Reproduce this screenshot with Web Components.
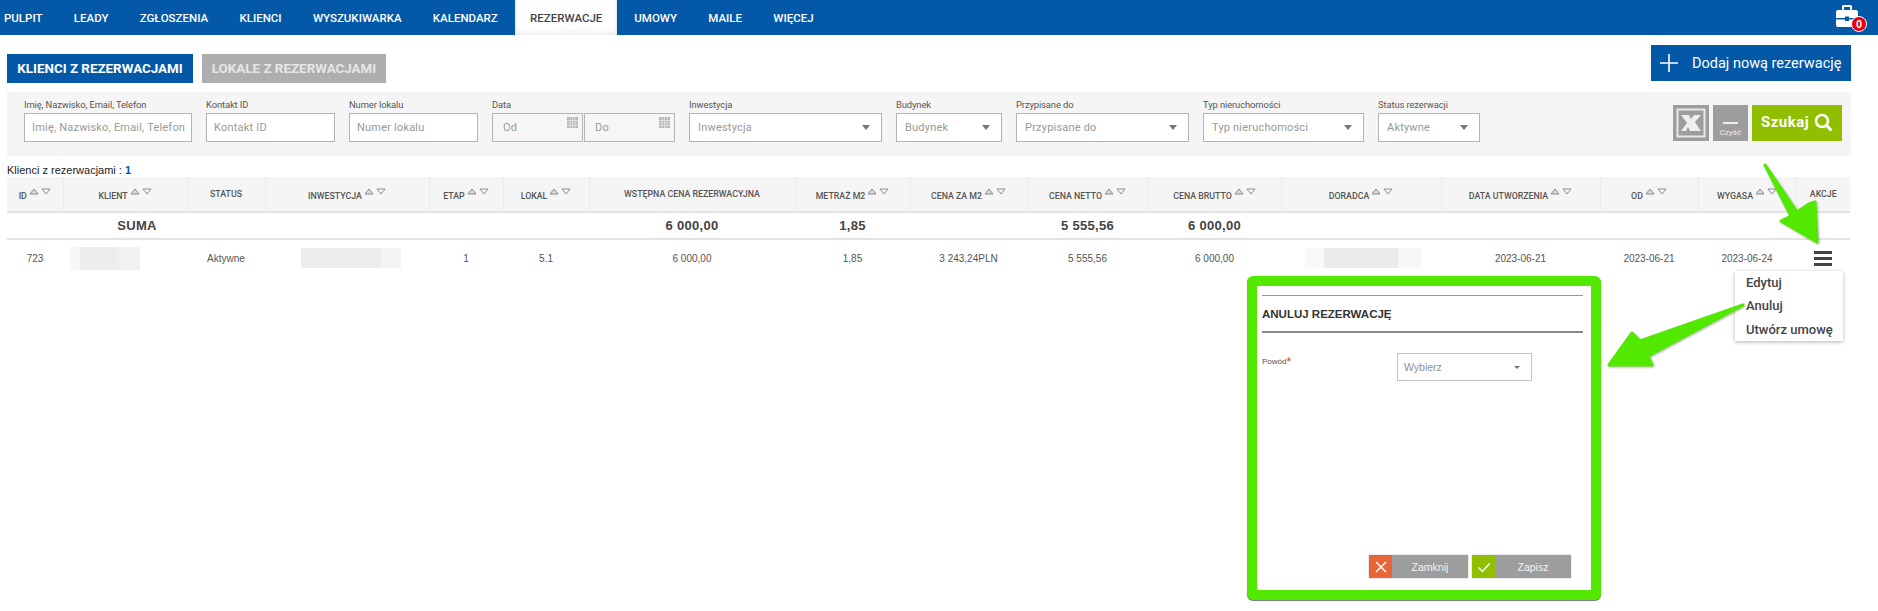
<!DOCTYPE html>
<html lang="pl">
<head>
	<meta charset="utf-8">
	<title>Rezerwacje</title>
	<style type="text/css">
html, body { margin: 0; padding: 0; background: #fff; }
body { position: relative; width: 1878px; height: 611px; overflow: hidden; font-family: Roboto, "Liberation Sans", sans-serif; color: #444; }
main { display: block; padding: 10px 27px 0 7px; }
	</style>
	<script type="text/javascript">
const ICON_CAL = '<svg width="11" height="11" viewBox="0 0 11 11"><rect width="11" height="11" fill="#b4b4b4"/><path d="M0 3.5h11M0 6h11M0 8.5h11M3 0v11M5.5 0v11M8 0v11" stroke="#e8e8e8" stroke-width="0.8"/></svg>';
const ICON_SORT = '<svg width="22" height="7" viewBox="0 0 22 7"><path d="M1 6L5 1L9 6Z" fill="#dcdcdc" stroke="#8a8a8a"/><path d="M13 1L17 6L21 1Z" fill="#f8f8f8" stroke="#8a8a8a"/></svg>';

function Define( name, css, html )
{
	customElements.define( name, class extends HTMLElement
	{
		constructor()
		{
			super();
			this.attachShadow( { mode: 'open' } );
		}

		connectedCallback()
		{
			const render = typeof html === 'function' ? html( this ) : html;
			this.shadowRoot.innerHTML = '<style>' + css + '</style>' + render;
		}
	} );
}

Define( 'app-nav',
[
	':host { display: flex; height: 35px; background: #0358a7; align-items: stretch; padding-left: 4px; position: relative; }',
	'a { display: flex; align-items: center; font: 500 11.5px Roboto, sans-serif; color: #fff; margin-right: 31.3px; white-space: nowrap; }',
	'a.on { background: linear-gradient( #fff 80%, #f1f1f1 ); color: #444; padding: 0 15px; margin: 0 17px 0 -14px; box-shadow: inset 3px 0 3px -3px #ccc, inset -3px 0 3px -3px #ccc; }',
	'.case { position: absolute; left: 1836px; top: 4px; width: 22px; height: 23px; }',
	'b { position: absolute; left: 1851px; top: 16px; width: 14px; height: 14px; border-radius: 50%; border: 1.5px solid #fff; background: #e8000d; color: #fff; font: 700 11px/14px "Liberation Sans", sans-serif; text-align: center; }',
].join( '' ),
	[ 'PULPIT', 'LEADY', 'ZGŁOSZENIA', 'KLIENCI', 'WYSZUKIWARKA', 'KALENDARZ', 'REZERWACJE', 'UMOWY', 'MAILE', 'WIĘCEJ' ]
		.map( ( t ) => '<a' + ( t === 'REZERWACJE' ? ' class="on"' : '' ) + '>' + t + '</a>' ).join( '' )
	+ '<svg class="case" viewBox="0 0 22 23"><path d="M6 6V2.500Q6 1 7.500 1h7Q16 1 16 2.500V6h-2V3H8v3Z" fill="#fff"/><path d="M0 8Q0 6 2 6h18Q22 6 22 8v6H13v-1.500H9V14H0Z" fill="#fff"/><path d="M0 15.500h9V17h4v-1.500h9V21Q22 23 20 23H2Q0 23 0 21Z" fill="#fff"/></svg><b>0</b>'
);

Define( 'tab-button',
[
	':host { display: inline-flex; align-items: center; justify-content: center; height: 29px; font: 700 13.4px Roboto, sans-serif; color: #fff; background: #0358a7; white-space: nowrap; }',
	':host( [ off ] ) { background: #aeaeae; color: #e6e6e6; }',
].join( '' ), '<slot></slot>' );

Define( 'add-button',
[
	':host { display: flex; align-items: center; height: 36px; width: 200px; box-sizing: border-box; padding-left: 9px; gap: 14px; background: #0358a7; color: #fff; font: 400 14.500px Roboto, sans-serif; white-space: nowrap; }',
].join( '' ), '<svg width="18" height="18" viewBox="0 0 18 18"><path d="M9 0v18M0 9h18" stroke="#fff" stroke-width="1.600"/></svg><slot></slot>' );

Define( 'filter-field',
[
	':host { display: block; font: 400 9.4px/14px Roboto, sans-serif; color: #555; width: var( --w ); }',
	'.l { display: block; height: 15px; white-space: nowrap; letter-spacing: -0.1px; }',
	'.b { display: flex; gap: 1px; }',
	'.i { flex: 1; position: relative; display: flex; align-items: center; justify-content: space-between; height: 29px; box-sizing: border-box; border: 1px solid #b4b4b4; background: #fff; padding: 0 7px; font: 400 11px Roboto, sans-serif; color: #999; white-space: nowrap; overflow: hidden; letter-spacing: 0.2px; }',
	'.i.d { background: #f6f6f6; padding-left: 10px; }',
	'.i svg { position: absolute; right: 4px; top: 3px; }',
	'.a { width: 0; height: 0; border: 4px solid transparent; border-top: 5px solid #777; border-bottom: 0; margin-right: 4px; }',
].join( '' ),
	( el ) =>
	{
		const label = el.getAttribute( 'label' );
		const kind = el.getAttribute( 'kind' );
		const value = el.getAttribute( 'value' ) || label;
		let box = '<div class="i">' + value + '</div>';
		if ( kind === 'select' ) { box = '<div class="i" style="padding-left:8px">' + value + '<span class="a"></span></div>'; }
		if ( kind === 'date' ) { box = '<div class="i d">Od' + ICON_CAL + '</div><div class="i d">Do' + ICON_CAL + '</div>'; }
		return '<span class="l">' + label + '</span><div class="b">' + box + '</div>';
	}
);

Define( 'filter-panel',
[
	':host { display: flex; height: 64px; box-sizing: border-box; margin-top: 9px; padding: 6px 9px 0 17px; gap: 14px; background: #f5f5f5; }',
	'.s { margin-left: auto; margin-top: 7px; display: flex; gap: 4px; height: 36px; color: #fff; }',
	'.x, .c { background: #9d9d9d; display: flex; flex-direction: column; align-items: center; justify-content: center; }',
	'.x { width: 36px; }',
	'.c { width: 35px; justify-content: flex-end; font: 400 8px/16px Roboto, sans-serif; color: #eee; }',
	'.c i { width: 15px; height: 2px; background: #eee; margin-bottom: 1px; }',
	'.g { width: 90px; background: #90bf00; display: flex; align-items: center; justify-content: center; gap: 5px; font: 700 15px Roboto, sans-serif; letter-spacing: 0.5px; padding-bottom: 2px; box-sizing: border-box; }',
].join( '' ),
	'<slot></slot><div class="s">'
	+ '<div class="x"><svg width="30" height="30" viewBox="0 0 30 30"><rect x="1.500" y="1.500" width="27" height="27" fill="none" stroke="#e8e8e8" stroke-width="2"/><path d="M5 7h8l2 4 3-4h7l-6 7 6 9H14l-2-4-2 4H5l6-8Z" fill="#eee"/></svg></div>'
	+ '<div class="c"><i></i>Czyść</div>'
	+ '<div class="g">Szukaj<svg width="19" height="19" viewBox="0 0 19 19"><circle cx="8" cy="8" r="6" fill="none" stroke="#fff" stroke-width="2.600"/><path d="M12.500 12.500L17.500 17.500" stroke="#fff" stroke-width="3"/></svg></div></div>'
);

const WIDTHS = [ 56, 124, 78, 164, 74, 86, 206, 115, 117, 121, 133, 160, 159, 98, 98, 54 ];
const HEAD =
[
	[ 'ID', 1 ], [ 'KLIENT', 1 ], [ 'STATUS', 0 ], [ 'INWESTYCJA', 1 ], [ 'ETAP', 1 ], [ 'LOKAL', 1 ], [ 'WSTĘPNA CENA REZERWACYJNA', 0 ], [ 'METRAŻ M2', 1 ],
	[ 'CENA ZA M2', 1 ], [ 'CENA NETTO', 1 ], [ 'CENA BRUTTO', 1 ], [ 'DORADCA', 1 ], [ 'DATA UTWORZENIA', 1 ], [ 'OD', 1 ], [ 'WYGASA', 1 ], [ 'AKCJE', 0 ],
];
const SUM = [ '', '<span style="padding-left:24px">SUMA</span>', '', '', '', '', '6 000,00', '1,85', '', '5 555,56', '6 000,00', '', '', '', '', '' ];
const BLUR =
{
	1: '<span class="r" style="width:70px;height:23px;margin-right:40px;background:linear-gradient(90deg,#f7f7f7 14%,#ededed 14%,#ededed 70%,#f1f2f1 70%)"></span>',
	3: '<span class="r" style="width:100px;height:20px;margin-left:8px;background:linear-gradient(90deg,#ececec 80%,#f4f4f4 80%)"></span>',
	11: '<span class="r" style="width:116px;height:20px;margin-left:3px;background:linear-gradient(90deg,#f9f9f9 16%,#ebebeb 16%,#ebebeb 80%,#f7f7f7 80%)"></span>',
};
const ROW = [ '723', BLUR[ 1 ], 'Aktywne', BLUR[ 3 ], '1', '5.1', '6 000,00', '1,85', '3 243,24PLN', '5 555,56', '6 000,00', BLUR[ 11 ], '2023-06-21', '2023-06-21', '2023-06-24', '<span class="m"><i></i><i></i><i></i></span>' ];

Define( 'reservation-table',
[
	':host { display: block; }',
	'table { border-collapse: collapse; table-layout: fixed; width: 1843px; font: 400 10px "Liberation Sans", sans-serif; color: #555; }',
	'th { height: 34px; padding: 0; background: #f5f5f5; border-bottom: 2px solid #e3e3e3; border-left: 1px solid #ececec; font: 500 8.8px Roboto, "Liberation Sans", sans-serif; color: #555; white-space: nowrap; }',
	'th:first-child { border-left: 0; }',
	'th svg { margin-left: 2px; vertical-align: 4px; }',
	'.sum td { height: 24px; padding: 0 0 1px; border-bottom: 2px solid #e3e3e3; font: 700 13px "Liberation Sans", sans-serif; letter-spacing: 0.3px; color: #444; text-align: center; }',
	'.row td { height: 36px; padding: 0; text-align: center; }',
	'.r { display: inline-block; vertical-align: middle; }',
	'.m { display: inline-flex; flex-direction: column; gap: 3px; width: 18px; vertical-align: middle; }',
	'.m i { display: block; height: 3px; background: #444; }',
].join( '' ),
	'<table><colgroup>' + WIDTHS.map( ( w ) => '<col style="width:' + w + 'px">' ).join( '' ) + '</colgroup>'
	+ '<tr>' + HEAD.map( ( h ) => '<th>' + h[ 0 ] + ( h[ 1 ] ? ICON_SORT : '' ) + '</th>' ).join( '' ) + '</tr>'
	+ '<tr class="sum">' + SUM.map( ( s ) => '<td>' + s + '</td>' ).join( '' ) + '</tr>'
	+ '<tr class="row">' + ROW.map( ( s ) => '<td>' + s + '</td>' ).join( '' ) + '</tr></table>'
);

Define( 'row-menu',
[
	':host { position: absolute; left: 1735px; top: 271px; width: 108px; height: 70px; box-sizing: border-box; padding: 0 11px; background: #fff; box-shadow: 0 1px 4px rgba( 0, 0, 0, 0.3 ); display: flex; flex-direction: column; justify-content: space-around; font: 500 13px Roboto, sans-serif; color: #444; white-space: nowrap; }',
].join( '' ), '<span>Edytuj</span><span>Anuluj</span><span>Utwórz umowę</span>' );

Define( 'modal-button',
[
	':host { display: flex; width: 99px; height: 23px; background: #9d9d9d; color: #f4f4f4; font: 400 10.500px "Liberation Sans", sans-serif; align-items: center; box-shadow: 0 0 1px #888; }',
	'.t { flex: 1; text-align: center; }',
	'.k { width: 23px; height: 23px; display: flex; align-items: center; justify-content: center; background: var( --c ); }',
].join( '' ),
	( el ) => '<span class="k">' + ( el.hasAttribute( 'ok' )
		? '<svg width="14" height="14" viewBox="0 0 14 14"><path d="M1.500 7.500L5.500 11.500L12.500 3.500" fill="none" stroke="#fff" stroke-width="1.400"/></svg>'
		: '<svg width="14" height="14" viewBox="0 0 14 14"><path d="M2 2L12 12M12 2L2 12" stroke="#fff" stroke-width="1.500"/></svg>' ) + '</span><span class="t"><slot></slot></span>'
);

Define( 'cancel-modal',
[
	':host { position: absolute; left: 1247px; top: 276px; width: 354px; height: 324px; box-sizing: border-box; border: 10px solid #52e800; border-radius: 6px; background: #fff; box-shadow: 0 1px 1px #777; padding: 9px 8px 0 5px; display: flex; flex-direction: column; }',
	'.blue { height: 1px; background: #6fa0d8; }',
	'h2 { margin: 0; height: 35px; display: flex; align-items: center; font: 700 11.5px "Liberation Sans", sans-serif; color: #333; }',
	'.gray { height: 2px; background: #8a8a8a; }',
	'.f { display: flex; margin-top: 20px; height: 28px; }',
	'.f label { width: 135px; font: 400 8px/18px "Liberation Sans", sans-serif; color: #555; }',
	'.f em { color: #f03030; font-style: normal; font-size: 12px; line-height: 10px; vertical-align: -2px; }',
	'.s { width: 135px; box-sizing: border-box; border: 1px solid #c4c4c4; display: flex; align-items: center; justify-content: space-between; padding: 0 11px 0 6px; font: 400 10.500px "Liberation Sans", sans-serif; color: #909090; }',
	'.s i { width: 0; height: 0; border: 3px solid transparent; border-top: 3px solid #777; border-bottom: 0; }',
	'.b { display: flex; gap: 4px; margin-top: auto; margin-bottom: 12px; padding-left: 107px; }',
	'modal-button:first-child { --c: #e8653a; }',
	'modal-button:last-child { --c: #90bf00; }',
].join( '' ),
	'<div class="blue"></div><h2>ANULUJ REZERWACJĘ</h2><div class="gray"></div>'
	+ '<div class="f"><label>Powód<em>*</em></label><div class="s">Wybierz<i></i></div></div>'
	+ '<div class="b"><modal-button>Zamknij</modal-button><modal-button ok>Zapisz</modal-button></div>'
);

Define( 'note-arrows',
[
	':host { position: absolute; left: 0; top: 0; width: 1878px; height: 611px; pointer-events: none; }',
	'svg { display: block; filter: drop-shadow( 1px 1px 1px rgba( 0, 0, 0, 0.3 ) ); }',
	'path { fill: #52e800; stroke: #52e800; stroke-width: 3; stroke-linejoin: round; }',
].join( '' ),
	'<svg width="1878" height="611" viewBox="0 0 1878 611">'
	+ '<path d="M1765 165L1797 212L1809 204L1815 202L1817 242L1781 221L1791 216Z"/>'
	+ '<path d="M1743 305L1648 356L1652 365L1609 365L1632 333L1640 341Z"/></svg>'
);
	</script>
</head>
<body>
	<app-nav></app-nav>
	<main>
		<div style="display:flex;justify-content:space-between">
			<div style="display:flex;gap:9px;padding-top:9px">
				<tab-button style="width:186px">KLIENCI Z REZERWACJAMI</tab-button>
				<tab-button off style="width:184px">LOKALE Z REZERWACJAMI</tab-button>
			</div>
			<add-button>Dodaj nową rezerwację</add-button>
		</div>
		<filter-panel>
			<filter-field style="--w:168px" label="Imię, Nazwisko, Email, Telefon"></filter-field>
			<filter-field style="--w:129px" label="Kontakt ID"></filter-field>
			<filter-field style="--w:129px" label="Numer lokalu"></filter-field>
			<filter-field style="--w:183px" label="Data" kind="date"></filter-field>
			<filter-field style="--w:193px" label="Inwestycja" kind="select"></filter-field>
			<filter-field style="--w:106px" label="Budynek" kind="select"></filter-field>
			<filter-field style="--w:173px" label="Przypisane do" kind="select"></filter-field>
			<filter-field style="--w:161px" label="Typ nieruchomości" kind="select"></filter-field>
			<filter-field style="--w:102px" label="Status rezerwacji" value="Aktywne" kind="select"></filter-field>
		</filter-panel>
		<div style="margin-top:7px;height:14px;font:400 11px/14px 'Liberation Sans',sans-serif;color:#222">Klienci z rezerwacjami : <b style="color:#0358a7">1</b></div>
		<reservation-table></reservation-table>
	</main>
	<row-menu></row-menu>
	<cancel-modal></cancel-modal>
	<note-arrows></note-arrows>
</body>
</html>
